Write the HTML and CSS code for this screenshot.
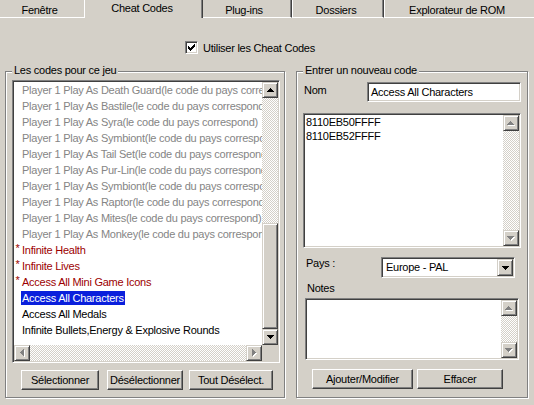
FILE: index.html
```html
<!DOCTYPE html>
<html><head><meta charset="utf-8"><title>Cheat Codes</title><link rel="stylesheet" href="styles.css"></head>
<body>
<svg class="defs" width="0" height="0"><defs>
<path id="up" d="M3 0h1v1h1v1h1v1h1v1H0V3h1V2h1V1h1z"/>
<path id="dn" d="M0 0h7v1H6v1H5v1H4v1H3V3H2V2H1V1H0z"/>
<path id="lt" d="M3 0h1v7H3V6H2V5H1V4H0V3h1V2h1V1h1z"/>
<path id="rt" d="M0 0h1v1h1v1h1v1h1v1H3v1H2v1H1v1H0z"/>
</defs></svg>
<div class="tabs">
  <div class="tab t1">Fenêtre</div>
  <div class="tab sel">Cheat Codes</div>
  <div class="tab t3">Plug-ins</div>
  <div class="tab t4">Dossiers</div>
  <div class="tab t5">Explorateur de ROM</div>
</div>
<div class="chk-row">
  <div class="chk"><svg width="7" height="7" viewBox="0 0 7 7"><path d="M0 2h1v3H0zM1 3h1v3H1zM2 4h1v3H2zM3 3h1v3H3zM4 2h1v3H4zM5 1h1v3H5zM6 0h1v3H6z"/></svg></div>
  <span>Utiliser les Cheat Codes</span>
</div>
<div class="groups">
  <div class="group g-left">
    <div class="legend">Les codes pour ce jeu</div>
    <div class="listbox">
      <div class="items">
        <div class="item gray"><span class="mark"></span><span class="txt">Player 1 Play As Death Guard(le code du pays correspond)</span></div>
        <div class="item gray"><span class="mark"></span><span class="txt">Player 1 Play As Bastile(le code du pays correspond)</span></div>
        <div class="item gray"><span class="mark"></span><span class="txt">Player 1 Play As Syra(le code du pays correspond)</span></div>
        <div class="item gray"><span class="mark"></span><span class="txt">Player 1 Play As Symbiont(le code du pays correspond)</span></div>
        <div class="item gray"><span class="mark"></span><span class="txt">Player 1 Play As Tail Set(le code du pays correspond)</span></div>
        <div class="item gray"><span class="mark"></span><span class="txt">Player 1 Play As Pur-Lin(le code du pays correspond)</span></div>
        <div class="item gray"><span class="mark"></span><span class="txt">Player 1 Play As Symbiont(le code du pays correspond)</span></div>
        <div class="item gray"><span class="mark"></span><span class="txt">Player 1 Play As Raptor(le code du pays correspond)</span></div>
        <div class="item gray"><span class="mark"></span><span class="txt">Player 1 Play As Mites(le code du pays correspond)</span></div>
        <div class="item gray"><span class="mark"></span><span class="txt">Player 1 Play As Monkey(le code du pays correspond)</span></div>
        <div class="item red"><span class="mark">*</span><span class="txt">Infinite Health</span></div>
        <div class="item red"><span class="mark">*</span><span class="txt">Infinite Lives</span></div>
        <div class="item red"><span class="mark">*</span><span class="txt">Access All Mini Game Icons</span></div>
        <div class="item selected"><span class="mark"></span><span class="txt">Access All Characters</span></div>
        <div class="item"><span class="mark"></span><span class="txt">Access All Medals</span></div>
        <div class="item"><span class="mark"></span><span class="txt">Infinite Bullets,Energy &amp; Explosive Rounds</span></div>
      </div>
      <div class="vscroll">
        <div class="sbtn"><svg width="7" height="4" viewBox="0 0 7 4"><use href="#up"/></svg></div>
        <div class="track"></div>
        <div class="thumb"></div>
        <div class="sbtn"><svg width="7" height="4" viewBox="0 0 7 4"><use href="#dn"/></svg></div>
      </div>
      <div class="hscroll">
        <div class="sbtn"><svg width="5" height="8" viewBox="0 0 5 8"><use href="#lt" x="1" y="1" fill="#fff"/><use href="#lt" fill="#808080"/></svg></div>
        <div class="track"></div>
        <div class="sbtn"><svg width="5" height="8" viewBox="0 0 5 8"><use href="#rt" x="1" y="1" fill="#fff"/><use href="#rt" fill="#808080"/></svg></div>
      </div>
      <div class="corner"></div>
    </div>
    <div class="btn-row lbtns">
      <div class="btn b-sel">Sélectionner</div>
      <div class="btn b-desel">Désélectionner</div>
      <div class="btn b-tout">Tout Désélect.</div>
    </div>
  </div>
  <div class="group g-right">
    <div class="legend r-legend">Entrer un nouveau code</div>
    <div class="nom-row">
      <span class="nom-label">Nom</span>
      <div class="field nom-input">Access All Characters</div>
    </div>
    <div class="field code">
      <div class="code-text">8110EB50FFFF<br>8110EB52FFFF</div>
      <div class="vscroll">
        <div class="sbtn"><svg width="8" height="5" viewBox="0 0 8 5"><use href="#up" x="1" y="1" fill="#fff"/><use href="#up" fill="#808080"/></svg></div>
        <div class="track"></div>
        <div class="sbtn"><svg width="8" height="5" viewBox="0 0 8 5"><use href="#dn" x="1" y="1" fill="#fff"/><use href="#dn" fill="#808080"/></svg></div>
      </div>
    </div>
    <div class="pays-row">
      <span class="pays-label">Pays :</span>
      <div class="field select">
        <span class="sel-text">Europe - PAL</span>
        <div class="sbtn drop"><svg width="7" height="4" viewBox="0 0 7 4"><use href="#dn"/></svg></div>
      </div>
    </div>
    <div class="notes-label">Notes</div>
    <div class="field notes">
      <div class="notes-text"></div>
      <div class="vscroll">
        <div class="sbtn"><svg width="8" height="5" viewBox="0 0 8 5"><use href="#up" x="1" y="1" fill="#fff"/><use href="#up" fill="#808080"/></svg></div>
        <div class="track"></div>
        <div class="sbtn"><svg width="8" height="5" viewBox="0 0 8 5"><use href="#dn" x="1" y="1" fill="#fff"/><use href="#dn" fill="#808080"/></svg></div>
      </div>
    </div>
    <div class="btn-row rbtns">
      <div class="btn b-add">Ajouter/Modifier</div>
      <div class="btn b-eff">Effacer</div>
    </div>
  </div>
</div>
</body></html>
```

FILE: styles.css
```css
* { box-sizing: border-box; }
body {
  margin: 0;
  width: 534px;
  height: 405px;
  overflow: hidden;
  background: #d4d0c8;
  font-family: "Liberation Sans", Arial, sans-serif;
  font-size: 11px;
  letter-spacing: -0.25px;
  color: #000;
}
.defs { position: absolute; width: 0; height: 0; }

/* tabs */
.tabs { display: flex; height: 18px; }
.tab {
  height: 18px;
  padding-top: 3px;
  line-height: 14px;
  text-align: center;
  white-space: nowrap;
  border-bottom: 1px solid #fff;
}
.t1 { width: 84px; padding-right: 5px; }
.sel {
  width: 119px;
  padding-top: 1px;
  padding-right: 3px;
  border-bottom: none;
  border-left: 1px solid #fff;
  border-right: 1px solid #404040;
  box-shadow: inset -1px 0 #808080;
}
.t3, .t4, .t5 {
  border-right: 1px solid #404040;
  box-shadow: inset -1px 0 #808080;
}
.t3 { width: 89px; padding-right: 6px; }
.t4 { width: 92px; padding-right: 4px; border-left: 1px solid #fff; }
.t5 { width: 150px; padding-right: 5px; border-left: 1px solid #fff; border-right: none; box-shadow: none; }

/* checkbox */
.chk-row {
  display: flex;
  align-items: center;
  gap: 5px;
  height: 13px;
  margin: 23px 0 0 185px;
}
.chk {
  width: 13px;
  height: 13px;
  background: #fff;
  border: 1px solid;
  border-color: #808080 #fff #fff #808080;
  box-shadow: inset 1px 1px #404040, inset -1px -1px #d4d0c8;
  display: flex;
  align-items: center;
  justify-content: center;
}
.chk svg { display: block; }

/* group boxes */
.groups { display: flex; gap: 11px; margin: 17px 0 0 5px; }
.group {
  height: 327px;
  border: 1px solid #808080;
  box-shadow: inset 1px 1px #fff, 1px 1px #fff;
}
.g-left { width: 280px; padding-left: 6px; }
.g-right { width: 232px; }
.legend {
  width: max-content;
  height: 14px;
  line-height: 14px;
  margin-top: -9px;
  padding: 0 2px;
  background: #d4d0c8;
}
.r-legend { margin-left: 6px; }

/* sunken fields */
.field, .listbox {
  background: #fff;
  border: 1px solid;
  border-color: #808080 #fff #fff #808080;
  box-shadow: inset 1px 1px #404040, inset -1px -1px #d4d0c8;
  padding: 1px;
}

/* list box */
.listbox {
  width: 268px;
  height: 283px;
  margin-top: 3px;
  display: grid;
  grid-template-columns: 1fr 16px;
  grid-template-rows: 1fr 16px;
}
.items { overflow: hidden; min-width: 0; }
.item {
  display: flex;
  align-items: flex-start;
  height: 16px;
  line-height: 16px;
  white-space: nowrap;
}
.mark { flex: none; width: 7px; line-height: 13px; text-align: center; }
.txt { padding: 0 1px; }
.gray .txt { color: #858585; }
.red { color: #9c0000; }
.selected .txt {
  background: #0a1fdc;
  color: #fff;
  height: 14px;
  line-height: 14px;
  margin-top: 1px;
}

/* scrollbars */
.vscroll { display: flex; flex-direction: column; }
.hscroll { display: flex; }
.track {
  flex: 1;
  background: repeating-conic-gradient(#fff 0 25%, #d4d0c8 0 50%) 0 0 / 2px 2px;
}
.sbtn, .thumb {
  background: #d4d0c8;
  border: 1px solid;
  border-color: #d4d0c8 #404040 #404040 #d4d0c8;
  box-shadow: inset 1px 1px #fff, inset -1px -1px #808080;
}
.sbtn {
  flex: none;
  width: 16px;
  height: 16px;
  display: flex;
  align-items: center;
  justify-content: center;
}
.sbtn svg { display: block; }
.thumb { height: 106px; flex: none; }
.corner { background: #d4d0c8; }

/* buttons */
.btn-row { display: flex; }
.btn {
  height: 20px;
  display: flex;
  align-items: center;
  justify-content: center;
  white-space: nowrap;
  background: #d4d0c8;
  border: 1px solid;
  border-color: #fff #404040 #404040 #fff;
  box-shadow: inset -1px -1px #808080;
}
.lbtns { margin: 7px 0 0 9px; }
.b-sel { width: 78px; }
.b-desel { width: 76px; margin-left: 8px; }
.b-tout { width: 84px; margin-left: 6px; }
.rbtns { margin: 9px 0 0 15px; gap: 4px; }
.b-add { width: 101px; }
.b-eff { width: 86px; }

/* right group content */
.nom-row { display: flex; align-items: flex-start; margin: 5px 0 0 7px; }
.nom-label { width: 63px; line-height: 16px; }
.nom-input { width: 154px; height: 20px; line-height: 16px; padding-left: 3px; white-space: nowrap; overflow: hidden; }
.code {
  width: 218px;
  height: 135px;
  margin: 11px 0 0 6px;
  display: grid;
  grid-template-columns: 1fr 16px;
}
.code-text { line-height: 14px; padding-left: 1px; }
.pays-row { display: flex; align-items: flex-start; margin: 9px 0 0 9px; }
.pays-label { width: 75px; line-height: 13px; }
.select {
  width: 134px;
  height: 21px;
  display: flex;
  align-items: stretch;
}
.sel-text { flex: 1; line-height: 17px; padding-left: 3px; }
.drop { height: 17px; }
.notes-label { margin: 4px 0 0 10px; line-height: 13px; }
.notes {
  width: 214px;
  height: 62px;
  margin: 3px 0 0 8px;
  display: grid;
  grid-template-columns: 1fr 16px;
}
```
